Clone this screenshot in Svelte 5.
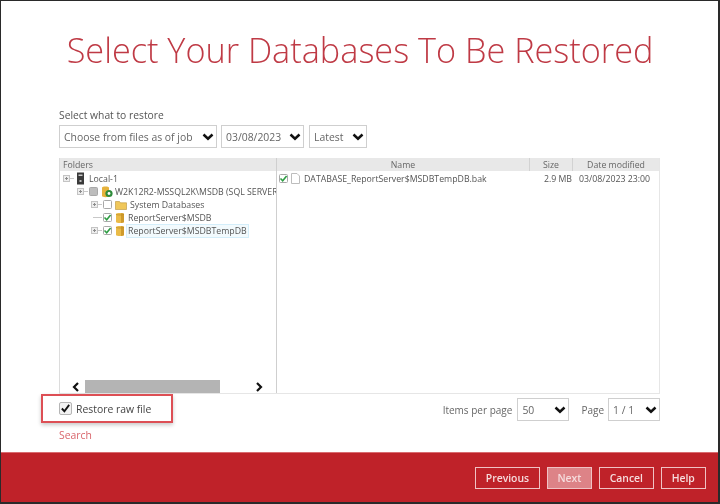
<script>
  const tree = [
    { id: 'local', label: 'Local-1', indent: 0, toggle: true, icon: 'server' },
    { id: 'db', label: 'W2K12R2-MSSQL2K\\MSDB (SQL SERVER)', indent: 1, toggle: true, check: 'partial', icon: 'sql' },
    { id: 'sys', label: 'System Databases', indent: 2, toggle: true, check: 'off', icon: 'folder' },
    { id: 'rs', label: 'ReportServer$MSDB', indent: 2, toggle: false, check: 'on', icon: 'cyl' },
    { id: 'tmp', label: 'ReportServer$MSDBTempDB', indent: 2, toggle: true, check: 'on', icon: 'cyl', selected: true }
  ];
</script>

{#snippet chevron()}
  <svg class="chev" width="12" height="8" viewBox="0 0 12 8"><path d="M1.500 1.500 6 5.700 10.500 1.500" fill="none" stroke="#111" stroke-width="2.500"/></svg>
{/snippet}

{#snippet check(state)}
  <span class="cb {state}">
    {#if state === 'on'}
      <svg width="9" height="9" viewBox="0 0 9 9"><path d="M1.500 4.500 3.700 6.700 7.600 2" fill="none" stroke="#2f9e44" stroke-width="1.600"/></svg>
    {/if}
  </span>
{/snippet}

{#snippet select(label, cls)}
  <div class="select {cls}"><span>{label}</span>{@render chevron()}</div>
{/snippet}

<div class="frame">
  <main class="content">
    <h1>Select Your Databases To Be Restored</h1>
    <div class="what">Select what to restore</div>
    <div class="selects">
      {@render select('Choose from files as of job', 'job')}
      {@render select('03/08/2023', 'date')}
      {@render select('Latest', 'latest')}
    </div>

    <section class="panel">
      <div class="left">
        <div class="head folders">Folders</div>
        <div class="tree">
          {#each tree as n}
            <div class="row" class:i1={n.indent === 1} class:i2={n.indent === 2}>
              {#if n.toggle}
                <svg class="toggle" width="11" height="7" viewBox="0 0 11 7"><rect x=".5" y=".5" width="6" height="6" fill="#eee" stroke="#c4c4c4"/><path d="M2 3.500H5M3.500 2V5" stroke="#8c8c8c"/><path d="M7 3.500H11" stroke="#c8c8c8"/></svg>
              {:else}
                <svg class="toggle" width="11" height="7" viewBox="0 0 11 7"><path d="M2 3.500H11" stroke="#c8c8c8"/></svg>
              {/if}
              {#if n.check}{@render check(n.check)}{/if}
              {#if n.icon === 'server'}
                <svg class="ic" width="9" height="13" viewBox="0 0 9 13"><rect x="1" y="0.500" width="7" height="12" fill="#3a3a3a"/><rect x="2.500" y="2.500" width="4" height="1.500" fill="#ccc"/><rect x="3.500" y="8" width="2" height="2" fill="#bbb"/></svg>
              {:else if n.icon === 'sql'}
                <svg class="ic" width="12" height="13" viewBox="0 0 12 13"><path d="M1 2.500C1 1 8 1 8 2.500V11C8 12.500 1 12.500 1 11Z" fill="#e6b23c"/><circle cx="8" cy="8.500" r="3.600" fill="#2e8b3a"/><circle cx="8" cy="8.500" r="1.400" fill="#fff"/></svg>
              {:else if n.icon === 'folder'}
                <svg class="ic" width="12" height="10" viewBox="0 0 12 10"><path d="M.5 1.500H4.500L5.500 2.800H11.500V9.500H.5Z" fill="#f0c75a" stroke="#b8923a" stroke-width=".6"/></svg>
              {:else}
                <svg class="ic" width="10" height="12" viewBox="0 0 10 12"><path d="M1 2C1 .6 9 .6 9 2V10C9 11.400 1 11.400 1 10Z" fill="#eabb48"/><path d="M6 1.200C7.500 1.300 9 1.500 9 2V10C9 10.500 7.500 10.800 6 10.900Z" fill="#cf9a2c"/><path d="M1 2C1 3.300 9 3.300 9 2" fill="none" stroke="#c08f25" stroke-width=".8"/></svg>
              {/if}
              <span class="label" class:selected={n.selected}>{n.label}</span>
            </div>
          {/each}
        </div>
        <div class="hscroll">
          <svg width="8" height="10" viewBox="0 0 8 10"><path d="M6 1 2 5 6 9" fill="none" stroke="#111" stroke-width="2.200"/></svg>
          <div class="track"><div class="thumb"></div></div>
          <svg width="8" height="10" viewBox="0 0 8 10"><path d="M2 1 6 5 2 9" fill="none" stroke="#111" stroke-width="2.200"/></svg>
        </div>
      </div>
      <div class="right">
        <div class="head cols">
          <span class="c-name">Name</span><span class="c-size">Size</span><span class="c-date">Date modified</span>
        </div>
        <div class="file">
          <div class="c-name fname">
            {@render check('on')}
            <svg class="ic" width="9" height="11" viewBox="0 0 9 11"><path d="M.5.5H6L8.500 3V10.500H.5Z" fill="#fff" stroke="#bdbdbd"/></svg>
            <span>DATABASE_ReportServer$MSDBTempDB.bak</span>
          </div>
          <span class="c-size fsize">2.9 MB</span>
          <span class="c-date fdate">03/08/2023 23:00</span>
        </div>
      </div>
    </section>

    <div class="under">
      <div class="left-under">
        <label class="raw">
          <span class="bigcb"><svg width="12" height="11" viewBox="0 0 12 11"><path d="M2 5.500 4.800 8.500 10 1.500" fill="none" stroke="#111" stroke-width="2"/></svg></span>
          Restore raw file
        </label>
        <a class="search" href="#search">Search</a>
      </div>
      <div class="paging">
        <span>Items per page</span>
        {@render select('50', 'per')}
        <span class="pg">Page</span>
        {@render select('1 / 1', 'page')}
      </div>
    </div>
  </main>
  <footer>
    <button>Previous</button>
    <button class="next">Next</button>
    <button>Cancel</button>
    <button>Help</button>
  </footer>
</div>

<style>
  :global(body) { margin: 0; background: #fff; }
  .frame {
    box-sizing: border-box;
    width: 720px;
    height: 504px;
    border: solid #2a2a2a;
    border-width: 1px 2px 2px 1px;
    display: flex;
    flex-direction: column;
    font-family: "Open Sans", "Noto Sans", sans-serif;
    color: #555;
    background: #fff;
    filter: blur(0.45px);
  }
  .content { flex: 1; min-height: 0; padding: 0 58px; display: flex; flex-direction: column; }
  h1 {
    margin: 29px 0 0 -58px;
    width: 718px;
    text-align: center;
    font-size: 34.250px;
    line-height: 40px;
    font-weight: 300;
    color: #bf3a45;
    white-space: nowrap;
  }
  .what { margin-top: 39px; font-size: 10.300px; line-height: 13px; color: #555; }
  .selects { margin-top: 3px; display: flex; gap: 4px; }
  .select {
    box-sizing: border-box;
    height: 23px;
    border: 1.500px solid #cfcfcf;
    display: flex;
    align-items: center;
    justify-content: space-between;
    padding: 0 2px 0 4px;
    font-size: 10.400px;
    color: #666;
    background: #fff;
  }
  .job { width: 158px; }
  .date { width: 83px; }
  .latest { width: 58px; margin-left: 1px; }
  .panel {
    margin-top: 10px;
    width: 601px;
    height: 236px;
    display: flex;
    border: solid #e6e6e6;
    border-width: 0 1px 1px 0;
    box-sizing: border-box;
  }
  .left {
    box-sizing: border-box;
    width: 218px;
    border-left: 1.500px solid #dcdcdc;
    border-right: 1.500px solid #cfcfcf;
    display: flex;
    flex-direction: column;
  }
  .right { flex: 1; display: flex; flex-direction: column; min-width: 0; }
  .head {
    height: 13px;
    background: #e8e8e8;
    font-size: 8.750px;
    line-height: 14px;
    color: #666;
    flex: none;
  }
  .folders { padding-left: 3px; }
  .cols { display: flex; }
  .c-name { width: 253px; flex: none; }
  .c-size { width: 43px; flex: none; }
  .c-date { flex: 1; }
  .cols span { text-align: center; box-sizing: border-box; }
  .cols .c-name, .cols .c-size { border-right: 1px solid #d2d2d2; }
  .tree { flex: 1; min-height: 0; padding-top: 1px; overflow: hidden; }
  .row {
    height: 13px;
    display: flex;
    align-items: center;
    gap: 2px;
    font-size: 8.750px;
    color: #555;
    white-space: nowrap;
    padding-left: 3px;
  }
  .row.i1 { padding-left: 17px; }
  .row.i2 { padding-left: 31px; }
  .toggle { flex: none; margin-right: -1px; }
  .row.i2 .ic { margin-right: 0; }
  .row.i1 .ic { margin-right: -1px; }
  .cb {
    box-sizing: border-box; width: 9px; height: 9px; border: 1px solid #a8a8a8; background: #fff; border-radius: 1.500px; flex: none; display: inline-flex; align-items: center; justify-content: center;
  }
  .cb svg { margin: -1px; }
  .cb.partial { background: #bdbdbd; }
  .ic { flex: none; margin: 0 1px; }
  .label { padding: 0 1px; line-height: 12px; }
  .label.selected { background: #f2fafd; outline: 1px solid #d4eefa; }
  .hscroll { flex: none; height: 13px; display: flex; align-items: center; padding: 0 13px 0 12px; gap: 3px; }
  .track { flex: 1; height: 13px; }
  .thumb { width: 135px; height: 13px; background: #b4b4b4; margin-left: 2px; }
  .file { display: flex; align-items: center; height: 13px; margin-top: 1px; font-size: 8.750px; color: #555; white-space: nowrap; }
  .fname { display: flex; align-items: center; gap: 2px; padding-left: 1px; box-sizing: border-box; }
  .fname span { margin-left: 1px; }
  .fsize { text-align: right; padding-right: 1px; box-sizing: border-box; }
  .fdate { padding-left: 6px; }
  .under { display: flex; justify-content: space-between; width: 601px; }
  .left-under { display: flex; flex-direction: column; }
  .raw {
    box-sizing: border-box;
    margin: 0 0 0 -18px;
    width: 132px;
    height: 29px;
    border: 2px solid #dd4f55;
    box-shadow: 0 2px 4px rgba(0,0,0,.22);
    display: flex;
    align-items: center;
    gap: 4px;
    padding-left: 16px;
    font-size: 10.400px;
    color: #444;
    background: #fff;
  }
  .bigcb { box-sizing: border-box; width: 13px; height: 13px; border: 1px solid #b5b5b5; border-radius: 2px; display: inline-flex; align-items: center; justify-content: center; background: #f2f2f2; }
  .search { margin-top: 5px; font-size: 10.400px; line-height: 14px; color: #d9666c; text-decoration: none; }
  .paging { display: flex; align-items: center; height: 23px; margin-top: 4px; font-size: 10px; color: #666; }
  .per { width: 52px; margin-left: 5px; }
  .pg { margin-left: 12px; margin-right: 4px; }
  .page { width: 52px; }
  footer {
    flex: none;
    height: 50px;
    background: #bf2229;
    border-top: 1px solid #d96b6f;
    box-sizing: border-box;
    display: flex;
    justify-content: flex-end;
    align-items: center;
    gap: 6.700px;
    padding: 0 12px 0 0;
  }
  button {
    box-sizing: border-box;
    height: 22px;
    padding: 0;
    border: 1.500px solid #f0c2c4;
    background: transparent;
    color: #f6dcdd;
    font-family: inherit;
    font-size: 10.400px;
    font-weight: 600;
  }
  button:nth-child(1) { width: 65px; }
  button:nth-child(2) { width: 45.500px; }
  button:nth-child(3) { width: 55px; }
  button:nth-child(4) { width: 45.500px; }
  button.next { background: #dd8387; }
</style>
